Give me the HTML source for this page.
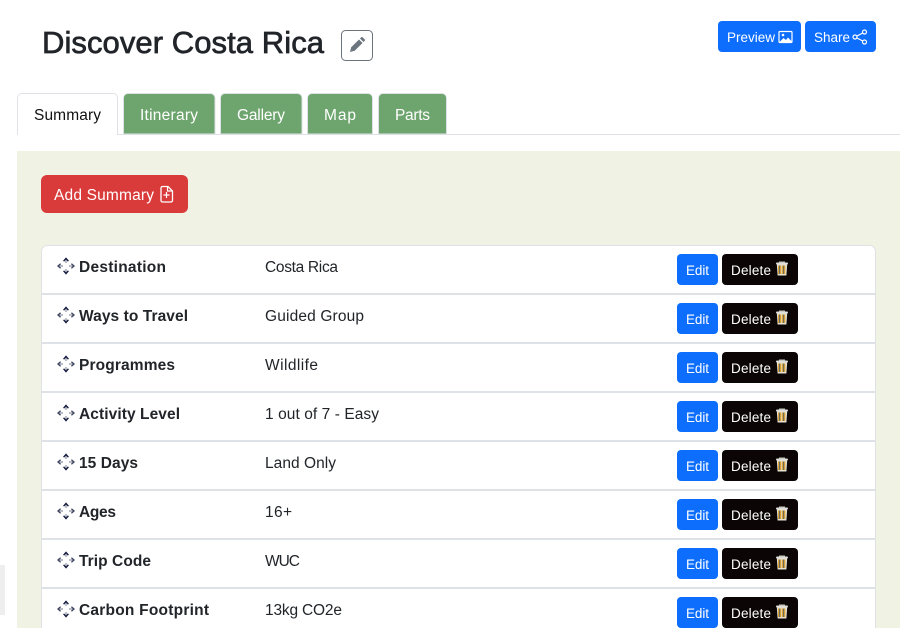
<!DOCTYPE html>
<html><head><meta charset="utf-8"><title>Discover Costa Rica</title>
<style>
html,body{margin:0;padding:0;background:#fff;width:902px;height:628px;overflow:hidden}
svg{display:block}
text{font-family:"Liberation Sans",sans-serif;font-size:15.5px;fill:#212529}
.b{font-weight:bold}
.w{fill:#fff}
.s{font-size:13.5px;fill:#fff}
</style></head><body>
<svg width="902" height="628" viewBox="0 0 902 628" xmlns="http://www.w3.org/2000/svg">
<defs>
<g id="mv">
<path d="M66 263v-4M66 269v4M63 266h-4M69 266h4" stroke="#8f95a3" stroke-width="1.200" fill="none"/>
<path d="M63.600 261.200L66 258.400l2.400 2.800M63.600 270.800L66 273.600l2.400-2.800" stroke="#141a3d" stroke-width="1.400" fill="none"/>
<path d="M60.600 263.800L58 266l2.600 2.200M71.400 263.800L74 266l-2.600 2.200" stroke="#3f4560" stroke-width="1.300" fill="none"/>
</g>
<g id="act">
<rect x="677" y="254" width="41" height="31" rx="4" fill="#0d6efd"/>
<text class="s" x="686" y="275" textLength="23">Edit</text>
<rect x="722" y="254" width="76" height="31" rx="4" fill="#0b0505"/>
<text class="s" x="731" y="275" textLength="40">Delete</text>
<path d="M776.800 264h10.400l-.8 11.500h-8.800z" fill="#e6e2d2"/>
<rect x="776" y="262.500" width="12" height="2" rx="1" fill="#dededa"/>
<rect x="779" y="261.500" width="6" height="1.400" fill="#c9c9c0"/>
<path d="M778.700 265.500v8.500M780.700 265.500v8.500M782.700 265.500v8.500M784.700 265.500v8.500" stroke="#dc9a1e" stroke-width="1.100"/>
<path d="M779.700 265.500v8.500M783.700 265.500v8.500" stroke="#31404a" stroke-width=".7"/>
</g>
</defs>

<text x="42" y="53" textLength="282" style="font-size:31px;stroke:#212529;stroke-width:.7">Discover Costa Rica</text>
<rect x="341.500" y="30.500" width="31" height="30" rx="4" fill="#fff" stroke="#6c757d"/>
<path d="M350 52l1.200-4.700 7.800-7.800 3.500 3.500-7.800 7.800z" fill="#6c757d"/>
<path d="M360 38.500l1.200-1.200a1 1 0 0 1 1.400 0l2.100 2.100a1 1 0 0 1 0 1.400l-1.200 1.200z" fill="#6c757d"/>

<rect x="718" y="21" width="83" height="31" rx="4" fill="#0d6efd"/>
<text class="s" x="727" y="42" textLength="48">Preview</text>
<rect x="779" y="31.500" width="13" height="11" rx="1" fill="none" stroke="#fff" stroke-width="1.200"/>
<path d="M780 41.500l3.500-3.500 2.500 2 2-2.500 3.500 3.500v1h-11.500z" fill="#fff"/>
<circle cx="783" cy="35" r="1.300" fill="#fff"/>
<rect x="805" y="21" width="71" height="31" rx="4" fill="#0d6efd"/>
<text class="s" x="814" y="42" textLength="36">Share</text>
<g fill="none" stroke="#fff" stroke-width="1.200">
<circle cx="864.500" cy="32" r="2"/><circle cx="864.500" cy="42" r="2"/><circle cx="855" cy="37" r="2"/>
<path d="M857 36l5.700-3M857 38l5.700 3"/>
</g>

<rect x="17" y="134" width="883" height="1" fill="#dee2e6"/>
<path d="M17.500 135V98a4.500 4.500 0 0 1 4.500-4.500h91a4.500 4.500 0 0 1 4.500 4.500v37" fill="#fff" stroke="#dee2e6"/>
<text x="34" y="120" textLength="67" style="fill:#111">Summary</text>
<g fill="#6ea56e" stroke="#dee2e6">
<path d="M123.500 134V98a4.500 4.500 0 0 1 4.500-4.500h82.500a4.500 4.500 0 0 1 4.500 4.500v36z"/>
<path d="M220.500 134V98a4.500 4.500 0 0 1 4.500-4.500h72.500a4.500 4.500 0 0 1 4.500 4.500v36z"/>
<path d="M307.500 134V98a4.500 4.500 0 0 1 4.500-4.500h56a4.500 4.500 0 0 1 4.500 4.500v36z"/>
<path d="M378.500 134V98a4.500 4.500 0 0 1 4.500-4.500h59a4.500 4.500 0 0 1 4.500 4.500v36z"/>
</g>
<text class="w" x="140" y="120" textLength="58">Itinerary</text>
<text class="w" x="237" y="120" textLength="48">Gallery</text>
<text class="w" x="324" y="120" textLength="32">Map</text>
<text class="w" x="395" y="120" textLength="35">Parts</text>

<rect x="17" y="151" width="883" height="477" fill="#f0f2e4"/>
<rect x="0" y="565" width="5" height="50" fill="#eeeeee"/>

<rect x="41" y="175" width="147" height="38" rx="6" fill="#d93a3a"/>
<text class="w" x="54" y="200" textLength="100">Add Summary</text>
<path d="M162.500 186.500h5.500l4.500 4.500v9.500a1.500 1.500 0 0 1-1.500 1.500h-8.500a1.500 1.500 0 0 1-1.500-1.500v-12.500a1.500 1.500 0 0 1 1.500-1.500z" fill="none" stroke="#fff" stroke-width="1.300"/>
<path d="M167.500 187v4h4.500M166.500 192v6M163.500 195h6" fill="none" stroke="#fff" stroke-width="1.200"/>

<rect x="41.500" y="245.500" width="834" height="400" rx="6" fill="#fff" stroke="#dee2e6"/>
<rect x="42" y="293" width="833" height="2" fill="#dee2e6"/>
<rect x="42" y="342" width="833" height="2" fill="#dee2e6"/>
<rect x="42" y="391" width="833" height="2" fill="#dee2e6"/>
<rect x="42" y="440" width="833" height="2" fill="#dee2e6"/>
<rect x="42" y="489" width="833" height="2" fill="#dee2e6"/>
<rect x="42" y="538" width="833" height="2" fill="#dee2e6"/>
<rect x="42" y="587" width="833" height="2" fill="#dee2e6"/>

<use href="#mv"/><use href="#act"/>
<text class="b" x="79" y="272" textLength="87">Destination</text>
<text x="265" y="272" textLength="73">Costa Rica</text>

<g transform="translate(0,49)"><use href="#mv"/><use href="#act"/>
<text class="b" x="79" y="272" textLength="109">Ways to Travel</text>
<text x="265" y="272" textLength="99">Guided Group</text></g>

<g transform="translate(0,98)"><use href="#mv"/><use href="#act"/>
<text class="b" x="79" y="272" textLength="96">Programmes</text>
<text x="265" y="272" textLength="53">Wildlife</text></g>

<g transform="translate(0,147)"><use href="#mv"/><use href="#act"/>
<text class="b" x="79" y="272" textLength="101">Activity Level</text>
<text x="265" y="272" textLength="114">1 out of 7 - Easy</text></g>

<g transform="translate(0,196)"><use href="#mv"/><use href="#act"/>
<text class="b" x="79" y="272" textLength="59">15 Days</text>
<text x="265" y="272" textLength="71">Land Only</text></g>

<g transform="translate(0,245)"><use href="#mv"/><use href="#act"/>
<text class="b" x="79" y="272" textLength="37">Ages</text>
<text x="265" y="272" textLength="27">16+</text></g>

<g transform="translate(0,294)"><use href="#mv"/><use href="#act"/>
<text class="b" x="79" y="272" textLength="72">Trip Code</text>
<text x="265" y="272" textLength="35">WUC</text></g>

<g transform="translate(0,343)"><use href="#mv"/><use href="#act"/>
<text class="b" x="79" y="272" textLength="130">Carbon Footprint</text>
<text x="265" y="272" textLength="77">13kg CO2e</text></g>
</svg>
</body></html>
